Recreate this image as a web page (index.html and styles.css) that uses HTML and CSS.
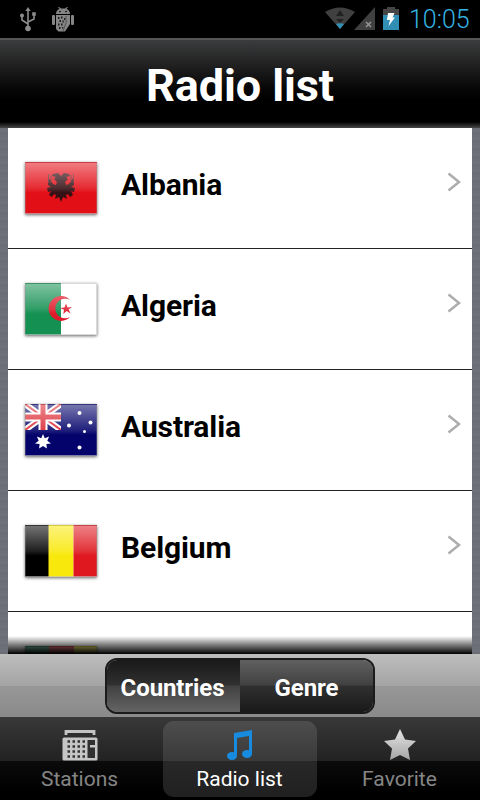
FILE: index.html
```
<!DOCTYPE html>
<html lang="en">
<head>
  <meta charset="UTF-8">
  <meta name="viewport" content="width=device-width, initial-scale=1">
  <link rel="stylesheet" href="styles.css">
  <title>Radio list</title>
</head>
<body>

<div class="app">
  <!-- Status Bar -->
  <div class="status-bar">
    <svg class="usb" width="18" height="25" viewBox="0 0 18 25" fill="#8c8c8c" stroke="#8c8c8c">
      <path d="M9 3v18M9 17L3 13V8M9 15l6-3V7" fill="none" stroke-width="1.6"/>
      <path d="M9 0l2.6 4H6.4z" stroke="none"/>
      <circle cx="9" cy="21.5" r="2.8" stroke="none"/>
      <circle cx="3" cy="8.5" r="2" stroke="none"/>
      <path d="M13.2 5.2h3.6v3.6h-3.6z" stroke="none"/>
    </svg>
    <svg class="android" width="22" height="26" viewBox="0 0 22 26" fill="#858585">
      <path d="M4 7C4 4 6 2.500 7.500 2L6 0h1l2 1.500h4L15 0h1l-1.500 2C16 2.500 18 4 18 7z"/>
      <rect x="0" y="8" width="3" height="10" rx="1"/>
      <rect x="19" y="8" width="3" height="10" rx="1"/>
      <path d="M4 8h14v9l-5 7.500H6.500L4 22z"/>
      <path d="M6 10h1.500v2H6zM9 9.500h1.500v2H9zM12 11h1.200v2H12zM7.500 13H9v2H7.500zM10.500 13.500h1.300v2h-1.300zM6 16.500h1.500v2H6zM9 16.500h1.500v2H9zM7 20h1.500v2H7zM10 20h1.300v1.500H10z" fill="#1c1c1c"/>
      <path d="M14 9v7l-3 8" fill="none" stroke="#444" stroke-width=".8"/>
      <circle cx="8" cy="4.600" r=".8" fill="#000"/>
      <circle cx="14" cy="4.600" r=".8" fill="#000"/>
    </svg>
    <svg class="wifi" width="50" height="24" viewBox="0 0 50 24">
      <path d="M0 5Q15-4 30 5L15 22z" fill="#404040"/>
      <path d="M15 3l4 6h-8zM11 12h8l-4 4z" fill="#222"/>
      <path d="M11 17Q15 15.500 19 17L15 22z" fill="#3290b4"/>
      <path d="M50 0v23H29z" fill="#404040"/>
      <path d="M41 15l5 5M46 15l-5 5" stroke="#999" stroke-width="1.400"/>
    </svg>
    <svg class="battery" width="16" height="24" viewBox="0 0 16 24">
      <path d="M4 0h8v2h4v6H0V2h4z" fill="#454545"/>
      <path d="M0 8h16v15H0z" fill="#318fb5"/>
      <path d="M5 6h6.500l-2 4.500H12L5.500 19l1.500-6H4z" fill="#fff"/>
    </svg>
    <span class="clock">10:05</span>
  </div>

  <div class="header">
    <h1>Radio list</h1>
  </div>

  <!-- Country List -->
  <div class="content">
    <ul class="list">
      <li class="row">
        <div class="flag">
          <svg width="72" height="52" viewBox="0 0 72 52">
            <rect width="72" height="52" fill="#e30f17"/>
            <path d="M36 14l-3-3-5 1-1 2 4 1-2 2 3 3-1 3-3-1-5-7v8l3 2-4 1 1 4 3-1-2 4 3 2 2-3 2 1-1 4 4-2 2 5 2-5 4 2-1-4 2-1 2 3 3-2-2-4 3 1 1-4-4-1 3-2v-8l-5 7-3 1-1-3 3-3-2-2 4-1-1-2-5-1z" fill="#351014"/>
            <path d="M23.500 12v9M26 13v8M46 13v8M48.500 12v9" stroke="#63252a" fill="none"/>
          </svg>
        </div>
        <span class="name">Albania</span>
        <svg class="arrow" width="14" height="20" viewBox="0 0 14 20"><path d="M1.500 1.500L12 10 1.500 18.500"/></svg>
      </li>
      <li class="row">
        <div class="flag">
          <svg width="72" height="52" viewBox="0 0 72 52">
            <rect width="72" height="52" fill="#fff"/>
            <rect width="36" height="52" fill="#149052"/>
            <path d="M45 17a12.400 12.400 0 1 0 0 17 9.800 9.800 0 1 1 0-17z" fill="#df1b2b"/>
            <path d="M41 20.500l1.500 4 4.500-.500-3.400 2.500 2 4-4-2.500-3.300 3 .7-4.200-4-1.800 4.500-.500z" fill="#df1b2b"/>
          </svg>
        </div>
        <span class="name">Algeria</span>
        <svg class="arrow" width="14" height="20" viewBox="0 0 14 20"><path d="M1.500 1.500L12 10 1.500 18.500"/></svg>
      </li>
      <li class="row">
        <div class="flag">
          <svg width="72" height="52" viewBox="0 0 72 52">
            <rect width="72" height="52" fill="#03036b"/>
            <svg width="36" height="26" viewBox="0 0 36 26">
              <path d="M0 0l36 26M36 0L0 26" stroke="#fff" stroke-width="6"/>
              <path d="M0 0l36 26M36 0L0 26" stroke="#dc2630" stroke-width="2"/>
              <path d="M18 0v26M0 13h36" stroke="#fff" stroke-width="9"/>
              <path d="M18 0v26M0 13h36" stroke="#dc2630" stroke-width="5"/>
            </svg>
            <g fill="#fff">
              <path d="M18 30l1.800 4.300 4.300-1.800-1.800 4.200 3.700 2.800-4.600.5.500 4.600-3.900-2.600-3.900 2.600.5-4.600-4.600-.5 3.700-2.800-1.800-4.200 4.300 1.800z"/>
              <circle cx="54.500" cy="9" r="2"/>
              <circle cx="65.500" cy="18.500" r="2"/>
              <circle cx="44" cy="21.500" r="2"/>
              <circle cx="59.500" cy="27.500" r="1.500"/>
              <circle cx="54.500" cy="43.500" r="2"/>
            </g>
          </svg>
        </div>
        <span class="name">Australia</span>
        <svg class="arrow" width="14" height="20" viewBox="0 0 14 20"><path d="M1.500 1.500L12 10 1.500 18.500"/></svg>
      </li>
      <li class="row">
        <div class="flag">
          <svg width="72" height="52" viewBox="0 0 72 52">
            <rect width="24" height="52" fill="#000"/>
            <rect x="23.500" width="25" height="52" fill="#f9e80b"/>
            <rect x="48.500" width="24" height="52" fill="#df171f"/>
          </svg>
        </div>
        <span class="name">Belgium</span>
        <svg class="arrow" width="14" height="20" viewBox="0 0 14 20"><path d="M1.500 1.500L12 10 1.500 18.500"/></svg>
      </li>
      <li class="row">
        <div class="flag">
          <svg width="72" height="52" viewBox="0 0 72 52">
            <rect width="24" height="52" fill="#087a4b"/>
            <rect x="24" width="25" height="52" fill="#d01825"/>
            <rect x="49" width="23" height="52" fill="#eedb17"/>
          </svg>
        </div>
      </li>
    </ul>
    <div class="fade"></div>
  </div>

  <!-- Countries / Genre Switch -->
  <div class="switch-bar">
    <div class="switch">
      <button class="selected">Countries</button>
      <button>Genre</button>
    </div>
  </div>

  <!-- Bottom Tabs -->
  <div class="tabs">
    <a class="tab">
      <svg width="36" height="32" viewBox="0 0 36 32">
        <path d="M4 6V2.500h28V6" fill="none" stroke="#c4c4c4" stroke-width="2.800"/>
        <rect x=".5" y="8.500" width="35" height="23" rx="1.500" fill="#c6c6c6"/>
        <path d="M5.500 12.500h18M5.500 17.500h18M5.500 22.500h18M5.500 27.500h18" stroke="#333" stroke-width="2.500" stroke-dasharray="2.500 2.500"/>
        <path d="M25.500 11H33v5h-5v2.500h5V29h-7.500z" fill="#303030"/>
      </svg>
      <span>Stations</span>
    </a>
    <a class="tab active">
      <svg width="28" height="32" viewBox="0 0 28 32" fill="#168be0">
        <path d="M8 4l18-3v24h-3V7L11 9v17H8z"/>
        <ellipse cx="6" cy="27" rx="5" ry="4"/>
        <ellipse cx="21" cy="25" rx="5" ry="4"/>
      </svg>
      <span>Radio list</span>
    </a>
    <a class="tab">
      <svg width="32" height="32" viewBox="0 0 32 32">
        <defs>
          <linearGradient id="star" x1="0" y1="0" x2="0" y2="1">
            <stop offset="0" stop-color="#e4e4e4"/>
            <stop offset="1" stop-color="#a5a5a5"/>
          </linearGradient>
        </defs>
        <path d="M16 0l5 10.500 11 1.500-8 7.500 2 11.500-10-5-10 5 2-11.500L0 12l11-1.500z" fill="url(#star)"/>
      </svg>
      <span>Favorite</span>
    </a>
  </div>
</div>

</body>
</html>
```
FILE: styles.css
```
body {
  font-family: Roboto, Arial, sans-serif;
  background-color: #000;
  margin: 0;
  padding: 0;
}
.app {
  display: flex;
  flex-direction: column;
  width: 480px;
  height: 800px;
  overflow: hidden;
}
.status-bar {
  display: flex;
  align-items: flex-start;
  box-sizing: border-box;
  height: 38px;
  padding: 7px 10px 0 19px;
  background-color: #000;
}
.android {
  margin-left: 15px;
}
.wifi {
  margin-left: auto;
}
.battery {
  margin-left: 8px;
}
.clock {
  width: 61px;
  margin-left: 10px;
  font-size: 25px;
  line-height: 26px;
  font-weight: 300;
  color: #33b5e5;
  white-space: nowrap;
}
.header {
  display: flex;
  justify-content: center;
  box-sizing: border-box;
  height: 90px;
  border-top: 2px solid #555;
  background: linear-gradient(#3b3c3e 0, #242424 22px, #070707 48px, #000 60px, #000 82px, #484848 88px);
}
.header h1 {
  margin: 0;
  font-size: 45px;
  line-height: 92px;
  font-weight: bold;
  letter-spacing: -0.1px;
  color: #fff;
}
.content {
  position: relative;
  height: 526px;
  padding: 0 8px;
  overflow: hidden;
  background: repeating-linear-gradient(#6b6e76 0, #70737b 3px, #696c74 5px, #6e7179 8px);
}
.list {
  margin: 0;
  padding: 0;
  list-style: none;
  background-color: #fff;
}
.row {
  display: flex;
  align-items: center;
  height: 120px;
  padding: 0 11px 0 17px;
  border-bottom: 1px solid #222;
}
.flag {
  position: relative;
  width: 72px;
  height: 52px;
  box-shadow: 0 1px 3px rgba(0, 0, 0, 0.6);
}
.flag svg {
  display: block;
}
/* glossy highlight */
.flag::after {
  content: "";
  position: absolute;
  inset: 0;
  border: 1px solid rgba(150, 150, 150, 0.35);
  background: linear-gradient(rgba(255, 255, 255, 0.45), rgba(255, 255, 255, 0.12) 50%, transparent 60%);
}
.name {
  flex: 1;
  margin-left: 24px;
  padding-bottom: 7px;
  font-size: 30px;
  font-weight: bold;
  letter-spacing: -0.1px;
  color: #000;
}
.arrow {
  margin-bottom: 12px;
  fill: none;
  stroke: #adadad;
  stroke-width: 2.5;
}
.fade {
  position: absolute;
  left: 8px;
  right: 8px;
  bottom: 0;
  height: 18px;
  background: linear-gradient(rgba(0, 0, 0, 0), rgba(0, 0, 0, 0.52) 50%, rgba(0, 0, 0, 0.85) 85%, #000);
}
.switch-bar {
  display: flex;
  justify-content: center;
  box-sizing: border-box;
  height: 63px;
  padding-top: 4px;
  background: linear-gradient(#bebebe, #a4a4a4 50%, #979797 51%, #8a8a8a);
}
.switch {
  display: flex;
  box-sizing: border-box;
  width: 270px;
  height: 56px;
  border: 2px solid #1b1b1b;
  border-radius: 12px;
  overflow: hidden;
}
.switch button {
  box-sizing: border-box;
  width: 50%;
  padding: 4px 0 0;
  border: none;
  font-family: inherit;
  font-size: 24px;
  font-weight: bold;
  letter-spacing: -0.1px;
  color: #fff;
  background: linear-gradient(#606060, #414141 48%, #303030 50%, #191919);
}
.switch button.selected {
  padding-right: 2px;
  background: linear-gradient(#191919, #303030 48%, #414141 50%, #646464);
}
.tabs {
  display: flex;
  gap: 6px;
  box-sizing: border-box;
  height: 83px;
  padding: 4px 3px 3px;
  background: linear-gradient(#383838, #222 44px, #0b0b0b 44px, #000 75px);
}
.tab {
  display: flex;
  flex: 1;
  flex-direction: column;
  align-items: center;
  padding-top: 8px;
  border-radius: 11px;
  font-size: 21px;
  line-height: 24px;
  color: #858585;
}
.tab span {
  margin-top: 6px;
  margin-right: 1px;
}
.tab.active {
  color: #fff;
  background: linear-gradient(#4d4d4d, #393939 40px, #282828 40px, #202020);
}
```
